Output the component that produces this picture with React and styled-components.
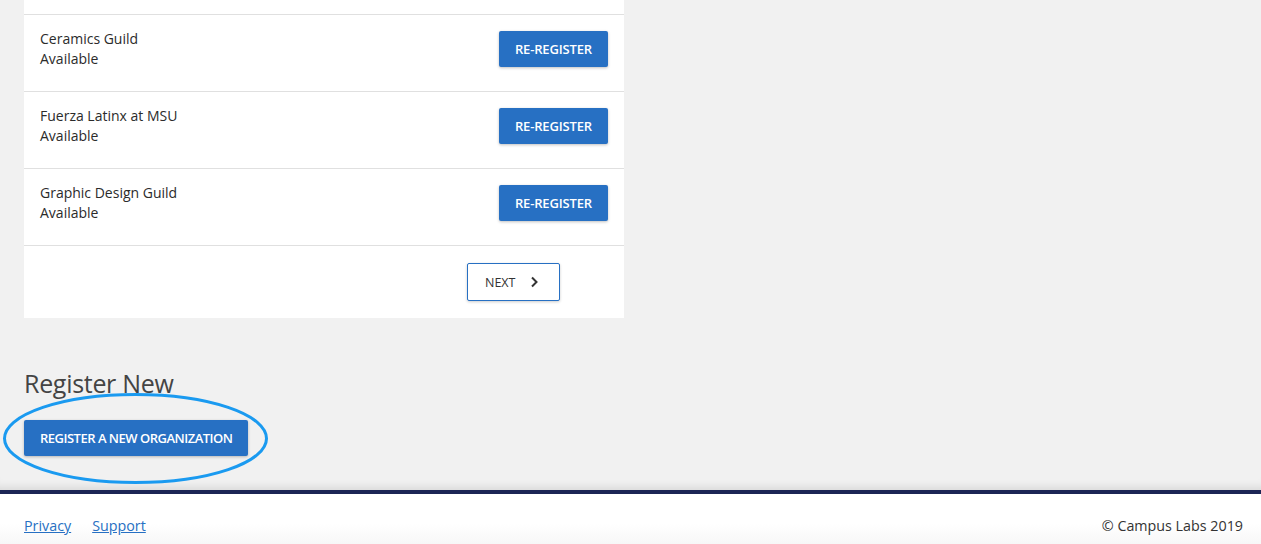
import React from 'react';
import styled, { createGlobalStyle } from 'styled-components';

const GlobalStyle = createGlobalStyle`
    html, body {
        margin: 0;
        padding: 0;
        background: #f1f1f1;
        font-family: "Open Sans", "Noto Sans", sans-serif;
        color: #333;
    }
`;

const Page = styled.div`
    display: flex;
    flex-direction: column;
    min-height: 544px;
    overflow: hidden;
`;

const Main = styled.main`
    flex: 1;
    padding: 0 24px 30px;
    box-shadow: inset 0 -10px 10px -8px rgba(0, 0, 0, 0.12);
`;

const Card = styled.section`
    width: 600px;
    background: #fff;
`;

const CardCap = styled.div`
    height: 14px;
`;

const Row = styled.div`
    display: flex;
    align-items: center;
    justify-content: space-between;
    height: 77px;
    padding: 0 16px 8px;
    box-sizing: border-box;
    border-top: 1px solid #e0e0e0;
`;

const OrgInfo = styled.div`
    display: flex;
    flex-direction: column;
    font-size: 14px;
    line-height: 20px;
    color: #2b2b2b;
`;

const BlueButton = styled.button`
    background: #2770c3;
    color: #fff;
    border: none;
    border-radius: 2px;
    height: 36px;
    padding: 0 16px;
    font-family: "Open Sans", "Noto Sans", sans-serif;
    font-size: 13px;
    font-weight: 600;
    letter-spacing: ${p => (p.$tight ? -0.5 : -0.15)}px;
    box-shadow: 0 1px 3px rgba(0, 0, 0, 0.25);
    cursor: pointer;
`;

const Pager = styled.div`
    display: flex;
    justify-content: flex-end;
    height: 73px;
    padding: 17px 64px 0 0;
    box-sizing: border-box;
    border-top: 1px solid #e0e0e0;
`;

const NextButton = styled.button`
    display: flex;
    align-items: center;
    gap: 14px;
    width: 93px;
    height: 38px;
    padding: 0 0 0 17px;
    box-sizing: border-box;
    background: #fff;
    border: 1px solid #2770c3;
    border-radius: 2px;
    box-shadow: 0 1px 3px rgba(0, 0, 0, 0.2);
    font-family: "Open Sans", "Noto Sans", sans-serif;
    font-size: 12.5px;
    color: #333;
    cursor: pointer;
`;

const RegisterSection = styled.div`
    position: relative;
    margin-top: 48px;
    width: 250px;
`;

const Heading = styled.h2`
    margin: 0 0 20px;
    font-size: 25px;
    font-weight: 400;
    line-height: 34px;
    color: #444;
    letter-spacing: -0.3px;
`;

const Ellipse = styled.svg`
    position: absolute;
    left: -22px;
    top: 25px;
    pointer-events: none;
`;

const Footer = styled.footer`
    display: flex;
    align-items: center;
    justify-content: space-between;
    height: 54px;
    padding: 12px 18px 0 24px;
    box-sizing: border-box;
    border-top: 4px solid #1c2555;
    background: linear-gradient(#fff 60%, #f7f7f7);
    font-size: 14.3px;
`;

const Links = styled.nav`
    display: flex;
    gap: 21px;
`;

const FooterLink = styled.a`
    color: #2770c3;
    text-decoration: underline;
`;

const orgs = ['Ceramics Guild', 'Fuerza Latinx at MSU', 'Graphic Design Guild'];

const App = () => {
    return (
        <Page>
            <GlobalStyle />
            <Main>
                <Card>
                    <CardCap />
                    {orgs.map(name => (
                        <Row key={name}>
                            <OrgInfo>
                                <span>{name}</span>
                                <span>Available</span>
                            </OrgInfo>
                            <BlueButton>RE-REGISTER</BlueButton>
                        </Row>
                    ))}
                    <Pager>
                        <NextButton>
                            NEXT
                            <svg width="10" height="12" viewBox="0 0 10 12">
                                <path d="M3 1.5 L7.5 6 L3 10.5" fill="none" stroke="#333" strokeWidth="2" />
                            </svg>
                        </NextButton>
                    </Pager>
                </Card>

                <RegisterSection>
                    <Heading>Register New</Heading>
                    <BlueButton $tight>REGISTER A NEW ORGANIZATION</BlueButton>
                    <Ellipse width="270" height="96" viewBox="0 0 270 96">
                        <ellipse cx="133.5" cy="47.5" rx="131" ry="44" fill="none" stroke="#1a9af0" strokeWidth="3" />
                    </Ellipse>
                </RegisterSection>
            </Main>
            <Footer>
                <Links>
                    <FooterLink href="#">Privacy</FooterLink>
                    <FooterLink href="#">Support</FooterLink>
                </Links>
                <span>© Campus Labs 2019</span>
            </Footer>
        </Page>
    );
};

export default App;
